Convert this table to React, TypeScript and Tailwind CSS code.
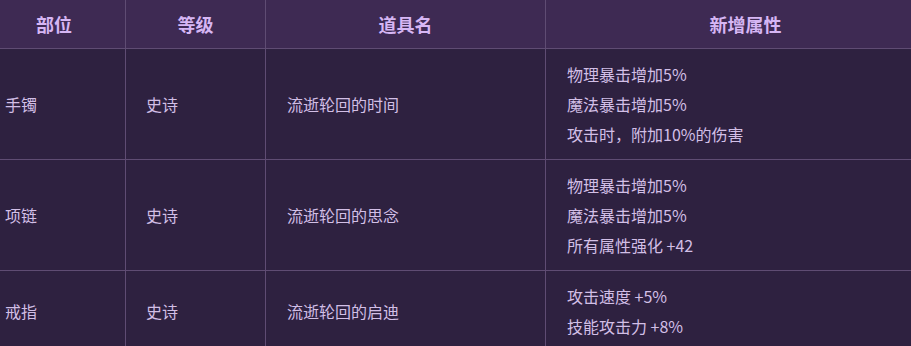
import React from "react";

const rows = [
  { part: "手镯", grade: "史诗", name: "流逝轮回的时间", attrs: ["物理暴击增加5%", "魔法暴击增加5%", "攻击时，附加10%的伤害"] },
  { part: "项链", grade: "史诗", name: "流逝轮回的思念", attrs: ["物理暴击增加5%", "魔法暴击增加5%", "所有属性强化 +42"] },
  { part: "戒指", grade: "史诗", name: "流逝轮回的启迪", attrs: ["攻击速度 +5%", "技能攻击力 +8%"] },
];

export default function App() {
  const font = { fontFamily: '"Microsoft YaHei", "Noto Sans CJK SC", "Noto Sans", sans-serif' };
  return (
    <div className="w-[911px] h-[346px] overflow-hidden bg-[#2e2140]" style={font}>
      <div className="ml-[-17px] w-[962px] grid grid-cols-[143px_140px_280px_399px]">
        {["部位", "等级", "道具名", "新增属性"].map((h, i) => (
          <div
            key={h}
            className={`h-[49px] flex items-center justify-center bg-[#3e2a53] border-b border-[#5f4c73] text-[18px] font-bold text-[#d6b6f4] ${i < 3 ? "border-r" : ""}`}
          >
            {h}
          </div>
        ))}
        {rows.map((r, ri) => (
          <React.Fragment key={ri}>
            <div className={`flex items-center pl-[22px] border-r border-[#5f4c73] text-[16px] text-[#d2bfe6] ${ri < 2 ? "border-b" : ""}`}>{r.part}</div>
            <div className={`flex items-center pl-[20px] border-r border-[#5f4c73] text-[16px] text-[#d2bfe6] ${ri < 2 ? "border-b" : ""}`}>{r.grade}</div>
            <div className={`flex items-center pl-[21px] border-r border-[#5f4c73] text-[16px] text-[#d2bfe6] ${ri < 2 ? "border-b" : ""}`}>{r.name}</div>
            <div className={`flex flex-col justify-start py-[10px] pl-[21px] border-[#5f4c73] text-[16px] text-[#d2bfe6] ${ri < 2 ? "border-b" : ""}`}>
              {r.attrs.map((a) => (
                <div key={a} className="h-[30px] leading-[30px]">{a}</div>
              ))}
            </div>
          </React.Fragment>
        ))}
      </div>
    </div>
  );
}
